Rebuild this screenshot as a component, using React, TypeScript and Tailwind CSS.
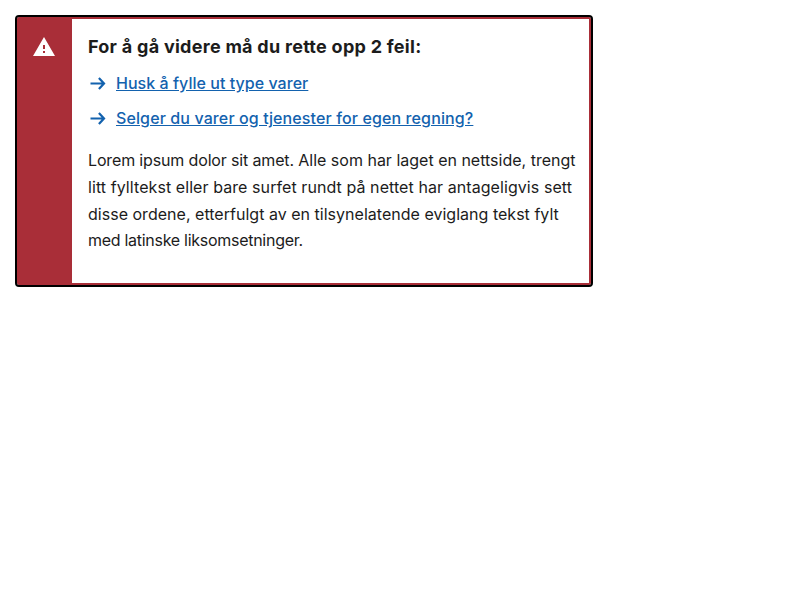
const links = [
  { label: 'Husk å fylle ut type varer', tracking: 'tracking-[0.04px]' },
  { label: 'Selger du varer og tjenester for egen regning?', tracking: 'tracking-[0.115px]' },
];

function WarningIcon() {
  return (
    <svg viewBox="0 0 24 24" className="size-6 fill-white">
      <path d="M1 21h22L12 2 1 21zm12-3h-2v-2h2v2zm0-4h-2v-4h2v4z" />
    </svg>
  );
}

function ArrowIcon() {
  return (
    <svg viewBox="0 0 20 20" className="size-5 shrink-0 fill-none stroke-[#1362ae] stroke-[2.2]">
      <path d="M2.5 10.5h13.5M10.9 5 16 10.5 10.9 16" />
    </svg>
  );
}

export default function App() {
  return (
    <main className="p-[17px] font-['Inter',sans-serif] text-[#1c1c1c]">
      <section className="flex h-[268px] w-[574px] rounded-[2px] border-2 border-[#a92e38] bg-white outline-2 outline-black">
        <div className="w-[53px] shrink-0 bg-[#a92e38] pt-4 pl-[13px]">
          <WarningIcon />
        </div>
        <div className="flex-1 pt-4 pl-4">
          <h2 className="text-[18px] leading-6 font-bold tracking-[0.27px]">For å gå videre må du rette opp 2 feil:</h2>
          <ul className="mt-[14px] flex flex-col gap-[15px]">
            {links.map(({ label, tracking }) => (
              <li key={label} className="flex items-center gap-2 leading-5">
                <ArrowIcon />
                <a href="#" className={`font-medium text-[#1362ae] underline ${tracking}`}>{label}</a>
              </li>
            ))}
          </ul>
          <p className="mt-[19.3px] w-[495px] text-base leading-[26.67px]">
            <span className="tracking-[-0.15px]">Lorem ipsum dolor sit amet. </span>
            <span>Alle som har laget en nettside, trengt </span>
            <span className="tracking-[0.075px]">litt fylltekst eller bare surfet rundt på nettet har antageligvis sett </span>
            <span className="tracking-[0.02px]">disse ordene, etterfulgt av en tilsynelatende eviglang tekst fylt </span>
            <span className="tracking-[-0.28px]">med latinske liksomsetninger.</span>
          </p>
        </div>
      </section>
    </main>
  );
}
